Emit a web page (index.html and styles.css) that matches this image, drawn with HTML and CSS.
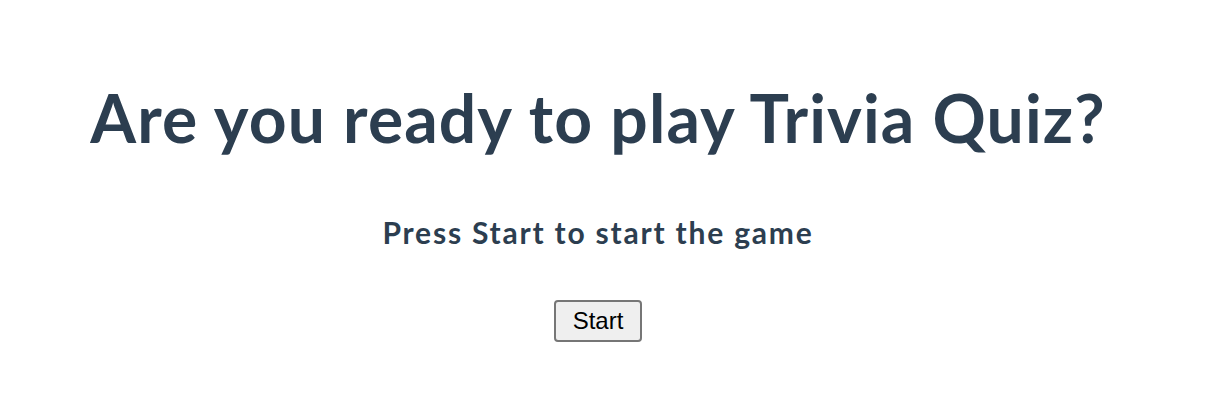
FILE: index.html
```html
<!DOCTYPE html>
<html>
<head>
<meta charset="utf-8">
<link rel="stylesheet" href="styles.css">
</head>
<body>
<div class="app">
  <h1 class="title">Are you ready to play Trivia Quiz?</h1>
  <h3 class="subtitle">Press Start to start the game</h3>
  <button class="start">Start</button>
</div>
</body>
</html>
```
FILE: styles.css
```css
body {
  margin: 0;
  background: #fff;
}
.app {
  font-family: Lato, "Noto Sans", sans-serif;
  color: #2c3e50;
  text-align: center;
  padding: 78px 24px 0 0;
  display: flex;
  flex-direction: column;
  align-items: center;
}
.title {
  margin: 0;
  font-size: 66px;
  font-weight: 700;
  line-height: 80px;
  letter-spacing: 1.1px;
}
.subtitle {
  margin: 56px 0 0;
  font-size: 30px;
  font-weight: 700;
  line-height: 36px;
  letter-spacing: 1.8px;
}
.start {
  margin-top: 50px;
  font-family: Arial, "Liberation Sans", sans-serif;
  font-size: 24px;
  padding: 5px 17px;
  background: #efefef;
  border: 2px solid #767676;
  border-radius: 4px;
  color: #000;
}
```
